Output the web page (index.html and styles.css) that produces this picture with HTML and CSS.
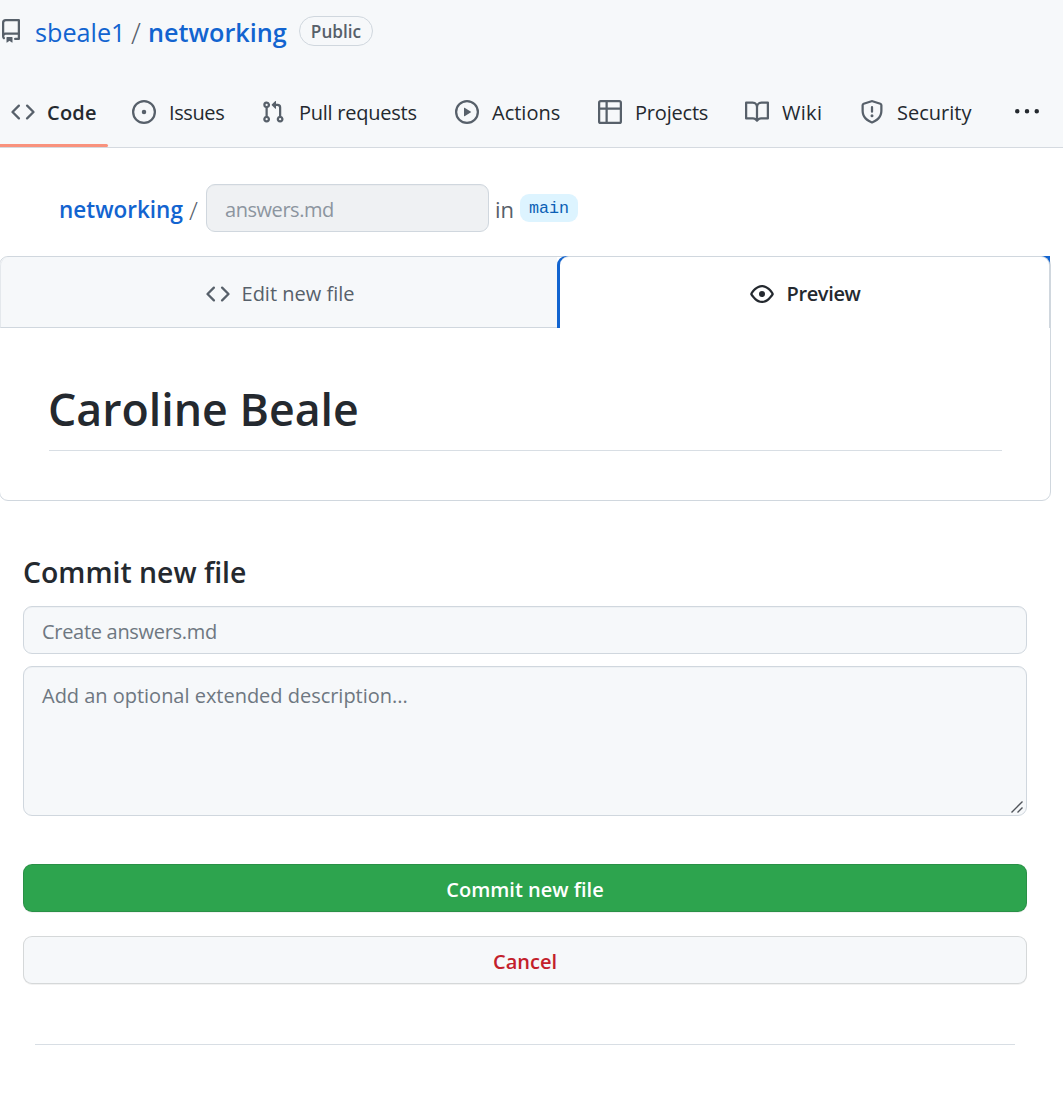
FILE: index.html
```html
<!DOCTYPE html>
<html lang="en">
<head>
<meta charset="utf-8">
<title>New File · sbeale1/networking</title>
<link rel="stylesheet" href="styles.css">
</head>
<body>
<header class="repo-header">
  <div class="repo-title">
    <svg class="icon repo-icon" viewBox="0 0 16 16"><path fill-rule="evenodd" d="M2 2.5A2.5 2.5 0 014.5 0h8.75a.75.75 0 01.75.75v12.5a.75.75 0 01-.75.75h-2.5a.75.75 0 110-1.5h1.75v-2h-8a1 1 0 00-.714 1.7.75.75 0 01-1.072 1.05A2.495 2.495 0 012 11.5v-9zm10.5-1V9h-8c-.356 0-.694.074-1 .208V2.5a1 1 0 011-1h8zM5 12.25v3.25a.25.25 0 00.4.2l1.45-1.087a.25.25 0 01.3 0L8.6 15.7a.25.25 0 00.4-.2v-3.25a.25.25 0 00-.25-.25h-3.5a.25.25 0 00-.25.25z"/></svg>
    <a class="owner">sbeale1</a>
    <span class="slash">/</span>
    <a class="repo-name">networking</a>
    <span class="label">Public</span>
  </div>
  <nav class="tabs">
    <a class="tab tab-selected"><svg class="icon" viewBox="0 0 16 16"><path fill-rule="evenodd" d="M4.72 3.22a.75.75 0 011.06 1.06L2.06 8l3.72 3.72a.75.75 0 11-1.06 1.06L.47 8.53a.75.75 0 010-1.06l4.25-4.25zm6.56 0a.75.75 0 10-1.06 1.06L13.94 8l-3.72 3.72a.75.75 0 101.06 1.06l4.25-4.25a.75.75 0 000-1.06l-4.25-4.25z"/></svg><span>Code</span></a>
    <a class="tab tab-issues"><svg class="icon" viewBox="0 0 16 16"><path d="M8 9.5a1.5 1.5 0 100-3 1.5 1.5 0 000 3z"/><path fill-rule="evenodd" d="M8 0a8 8 0 100 16A8 8 0 008 0zM1.5 8a6.5 6.5 0 1113 0 6.5 6.5 0 01-13 0z"/></svg><span>Issues</span></a>
    <a class="tab tab-pulls"><svg class="icon" viewBox="0 0 16 16"><path fill-rule="evenodd" d="M7.177 3.073L9.573.677A.25.25 0 0110 .854v4.792a.25.25 0 01-.427.177L7.177 3.427a.25.25 0 010-.354zM3.75 2.5a.75.75 0 100 1.5.75.75 0 000-1.5zm-2.25.75a2.25 2.25 0 113 2.122v5.256a2.251 2.251 0 11-1.5 0V5.372A2.25 2.25 0 011.5 3.25zM11 2.5h-1V4h1a1 1 0 011 1v5.628a2.251 2.251 0 101.5 0V5A2.5 2.5 0 0011 2.5zm1 10.25a.75.75 0 111.5 0 .75.75 0 01-1.5 0zM3.75 12a.75.75 0 100 1.5.75.75 0 000-1.5z"/></svg><span>Pull requests</span></a>
    <a class="tab"><svg class="icon" viewBox="0 0 16 16"><path fill-rule="evenodd" d="M1.5 8a6.5 6.5 0 1113 0 6.5 6.5 0 01-13 0zM8 0a8 8 0 100 16A8 8 0 008 0zM6.379 5.227A.25.25 0 006 5.442v5.117a.25.25 0 00.379.214l4.264-2.559a.25.25 0 000-.428L6.379 5.227z"/></svg><span>Actions</span></a>
    <a class="tab tab-projects"><svg class="icon" viewBox="0 0 16 16"><path fill-rule="evenodd" d="M0 1.75C0 .784.784 0 1.75 0h12.5C15.216 0 16 .784 16 1.75v12.5A1.75 1.75 0 0114.25 16H1.75A1.75 1.75 0 010 14.25V1.75zM1.5 6.5v7.75c0 .138.112.25.25.25H5v-8H1.5zM5 5H1.5V1.75a.25.25 0 01.25-.25H5V5zm1.5 1.5v8h7.75a.25.25 0 00.25-.25V6.5h-8zm8-1.5h-8V1.5h7.75a.25.25 0 01.25.25V5z"/></svg><span>Projects</span></a>
    <a class="tab tab-wiki"><svg class="icon" viewBox="0 0 16 16"><path fill-rule="evenodd" d="M0 1.75A.75.75 0 01.75 1h4.253c1.227 0 2.317.59 3 1.501A3.744 3.744 0 0111.006 1h4.245a.75.75 0 01.75.75v10.5a.75.75 0 01-.75.75h-4.507a2.25 2.25 0 00-1.591.659l-.622.621a.75.75 0 01-1.06 0l-.622-.621A2.25 2.25 0 005.258 13H.75a.75.75 0 01-.75-.75V1.75zm8.755 3a2.25 2.25 0 012.25-2.25H14.5v9h-3.757c-.71 0-1.4.201-1.992.572l.004-7.322zm-1.504 7.324l.004-5.073-.002-2.253A2.25 2.25 0 005.003 2.5H1.5v9h3.757a3.75 3.75 0 011.994.574z"/></svg><span>Wiki</span></a>
    <a class="tab"><svg class="icon" viewBox="0 0 16 16"><path fill-rule="evenodd" d="M7.467.133a1.75 1.75 0 011.066 0l5.25 1.68A1.75 1.75 0 0115 3.48V7c0 1.566-.32 3.182-1.303 4.682-.983 1.498-2.585 2.813-5.032 3.855a1.7 1.7 0 01-1.33 0c-2.447-1.042-4.049-2.357-5.032-3.855C1.32 10.182 1 8.566 1 7V3.48a1.75 1.75 0 011.217-1.667l5.25-1.68zm.61 1.429a.25.25 0 00-.153 0l-5.25 1.68a.25.25 0 00-.174.238V7c0 1.358.275 2.666 1.057 3.86.784 1.194 2.121 2.34 4.366 3.297a.2.2 0 00.154 0c2.245-.956 3.582-2.104 4.366-3.298C13.225 9.666 13.5 8.36 13.5 7V3.48a.25.25 0 00-.174-.237l-5.25-1.68zM9 10.5a1 1 0 11-2 0 1 1 0 012 0zm-.25-5.75a.75.75 0 10-1.5 0v3a.75.75 0 001.5 0v-3z"/></svg><span>Security</span></a>
    <a class="tab tab-more"><svg class="icon" viewBox="0 0 16 16"><path d="M8 9a1.5 1.5 0 100-3 1.5 1.5 0 000 3zM1.5 9a1.5 1.5 0 100-3 1.5 1.5 0 000 3zm13 0a1.5 1.5 0 100-3 1.5 1.5 0 000 3z"/></svg></a>
  </nav>
</header>
<main>
  <div class="file-path">
    <a class="path-repo">networking</a>
    <span class="path-slash">/</span>
    <div class="field filename">answers.md</div>
    <span class="path-in">in</span>
    <span class="branch">main</span>
  </div>
  <section class="editor">
    <div class="editor-tabs">
      <button class="editor-tab"><svg class="icon" viewBox="0 0 16 16"><path fill-rule="evenodd" d="M4.72 3.22a.75.75 0 011.06 1.06L2.06 8l3.72 3.72a.75.75 0 11-1.06 1.06L.47 8.53a.75.75 0 010-1.06l4.25-4.25zm6.56 0a.75.75 0 10-1.06 1.06L13.94 8l-3.72 3.72a.75.75 0 101.06 1.06l4.25-4.25a.75.75 0 000-1.06l-4.25-4.25z"/></svg><span>Edit new file</span></button>
      <div class="active-wrap">
        <button class="editor-tab editor-tab-active"><svg class="icon" viewBox="0 0 16 16"><path fill-rule="evenodd" d="M1.679 7.932c.412-.621 1.242-1.75 2.366-2.717C5.175 4.242 6.527 3.5 8 3.5c1.473 0 2.824.742 3.955 1.715 1.124.967 1.954 2.096 2.366 2.717a.119.119 0 010 .136c-.412.621-1.242 1.75-2.366 2.717C10.825 11.758 9.473 12.5 8 12.5c-1.473 0-2.824-.742-3.955-1.715C2.92 9.818 2.09 8.69 1.679 8.068a.119.119 0 010-.136zM8 2c-1.981 0-3.67.992-4.933 2.078C1.797 5.169.88 6.423.43 7.1a1.619 1.619 0 000 1.798c.45.678 1.367 1.932 2.637 3.024C4.329 13.008 6.019 14 8 14c1.981 0 3.67-.992 4.933-2.078 1.27-1.091 2.187-2.345 2.637-3.023a1.619 1.619 0 000-1.798c-.45-.678-1.367-1.932-2.637-3.023C11.671 2.992 9.981 2 8 2zm0 8a2 2 0 100-4 2 2 0 000 4z"/></svg><span>Preview</span></button>
      </div>
    </div>
    <article class="preview">
      <h1>Caroline Beale</h1>
    </article>
  </section>
  <form class="commit">
    <h2>Commit new file</h2>
    <input class="field summary" type="text" placeholder="Create answers.md">
    <div class="description-wrap">
      <textarea class="field description" placeholder="Add an optional extended description..."></textarea>
      <svg class="grip" viewBox="0 0 14 14"><path d="M1.5 12.5l11-11M7.5 12.5l5-5"/></svg>
    </div>
    <button type="button" class="btn btn-primary">Commit new file</button>
    <button type="button" class="btn btn-danger">Cancel</button>
  </form>
  <hr class="footer-rule">
</main>
</body>
</html>
```

FILE: styles.css
```css
* {
  box-sizing: border-box;
}

body {
  margin: 0;
  background: #fff;
  color: #24292f;
  font: 20px/30px "Open Sans", "Noto Sans", sans-serif;
  overflow: hidden;
}

button,
input,
textarea {
  font: inherit;
}

.icon {
  width: 24px;
  height: 24px;
  flex: none;
  fill: #57606a;
}

.repo-header {
  background: #f6f8fa;
  border-bottom: 1px solid #d5dae0;
}

.repo-title {
  display: flex;
  align-items: center;
  height: 64px;
  font-size: 25.2px;
  white-space: nowrap;
}

.repo-icon {
  margin: 0 12px 2px -1px;
}

.owner,
.repo-name,
.path-repo {
  color: #1264d0;
}

.owner {
  width: 96px;
}

.slash {
  width: 17px;
  padding-top: 1px;
  color: #57606a;
  font-size: 29px;
  font-weight: 300;
}

.repo-name {
  width: 151px;
  font-weight: 600;
}

.label {
  display: flex;
  align-items: center;
  justify-content: center;
  width: 74px;
  height: 30px;
  margin-bottom: 2px;
  padding-top: 1px;
  border: 1px solid #d0d7de;
  border-radius: 15px;
  color: #57606a;
  font-size: 17.2px;
  font-weight: 560;
}

.tabs {
  display: grid;
  grid-template-columns: 121px 129px 194px 143px 147px 115px 155px 24px;
  height: 67px;
  margin-top: 16px;
  padding-left: 11px;
}

.tab {
  display: flex;
  align-items: center;
  gap: 13px;
  padding-bottom: 3px;
  white-space: nowrap;
}

.tab span {
  padding-top: 2px;
}

.tab-selected {
  position: relative;
  gap: 12px;
  font-weight: 570;
  letter-spacing: 0.2px;
}

.tab-selected::after {
  content: "";
  position: absolute;
  left: -11px;
  bottom: 0;
  width: 108px;
  height: 3px;
  background: #f9927d;
  border-radius: 0 2px 2px 0;
}

.tab-issues {
  letter-spacing: -0.4px;
}

.tab-pulls {
  gap: 14px;
  letter-spacing: -0.25px;
}

.tab-projects {
  letter-spacing: -0.2px;
}

.tab-wiki {
  letter-spacing: 0.3px;
}

.tab-more .icon {
  fill: #24292f;
}

.file-path {
  display: flex;
  align-items: center;
  height: 108px;
  padding: 12px 0 0 59px;
  font-size: 22.5px;
  color: #57606a;
}

.path-repo {
  width: 130px;
  padding-top: 4px;
  font-weight: 580;
}

.path-slash {
  width: 17px;
  padding-top: 3px;
  font-size: 26px;
  font-weight: 300;
}

.field {
  border: 1px solid #d0d7de;
  border-radius: 9px;
  background: #f6f8fa;
  box-shadow: inset 0 1px 0 rgba(208, 215, 222, 0.2);
  font-size: 20px;
}

.filename {
  display: flex;
  align-items: center;
  width: 283px;
  height: 48px;
  padding: 4px 18px 0;
  background: #eff1f3;
  color: #8c959f;
  letter-spacing: -0.45px;
}

.path-in {
  width: 31px;
  padding: 2px 0 0 6px;
  font-size: 22px;
}

.branch {
  width: 58px;
  height: 28px;
  border-radius: 9px;
  background: #ddf4ff;
  color: #0b60b5;
  font: 16.7px/30px "Liberation Mono", monospace;
  text-align: center;
}

.editor {
  width: 1052px;
  height: 245px;
  margin-left: -1px;
  border: 1px solid #d0d7de;
  border-radius: 9px;
}

.editor-tabs {
  display: flex;
  height: 71px;
}

.editor-tab {
  display: flex;
  align-items: center;
  justify-content: center;
  gap: 12px;
  width: 557px;
  padding: 4px 0 0 2px;
  border: 0;
  border-bottom: 1px solid #d0d7de;
  border-left: 1px solid #e4e8ec;
  border-top-left-radius: 9px;
  background: #f6f8fa;
  color: #57606a;
}

.active-wrap {
  display: flex;
  width: 493px;
  margin-top: -1px;
  padding-left: 3px;
  border-top-left-radius: 9px;
  background: #1264d0;
}

.editor-tab-active {
  width: 490px;
  padding-top: 3px;
  border: 0;
  border-top: 1px solid #d0d7de;
  border-right: 1px solid #d0d7de;
  border-radius: 9px 9px 0 0;
  background: #fff;
  color: #24292f;
  font-weight: 550;
  letter-spacing: -0.35px;
}

.editor-tab-active .icon {
  fill: #24292f;
}

.preview {
  padding: 48px;
}

h1 {
  height: 75px;
  margin: 0 0 0 1px;
  border-bottom: 1px solid #d8dee4;
  font-size: 44.7px;
  font-weight: 570;
  line-height: 66px;
  text-indent: -1px;
}

.commit {
  display: flex;
  flex-direction: column;
  width: 1004px;
  margin: 53px 0 0 23px;
}

h2 {
  height: 52px;
  margin: 0;
  font-size: 28.4px;
  font-weight: 560;
  line-height: 36px;
}

.summary,
.description {
  display: block;
  width: 100%;
  color: #24292f;
}

.summary {
  height: 48px;
  padding: 3px 18px 0;
  letter-spacing: -0.3px;
}

.description-wrap {
  position: relative;
  margin-top: 12px;
}

.description {
  height: 150px;
  padding: 14px 18px;
  letter-spacing: -0.02px;
  resize: none;
}

.grip {
  position: absolute;
  right: 3px;
  bottom: 2px;
  width: 14px;
  height: 14px;
  fill: none;
  stroke: #50545a;
  stroke-width: 1.4;
}

.field::placeholder {
  color: #6e7781;
}

.btn {
  height: 48px;
  padding: 3px 0 0;
  border: 1px solid rgba(27, 31, 36, 0.15);
  border-radius: 9px;
  font-weight: 570;
  box-shadow: 0 1px 0 rgba(27, 31, 36, 0.06);
}

.btn-primary {
  margin-top: 48px;
  background: #2da44e;
  color: #fff;
}

.btn-danger {
  margin-top: 24px;
  background: #f6f8fa;
  color: #c3202b;
}

.footer-rule {
  width: 980px;
  height: 1px;
  margin: 60px 0 0 35px;
  border: 0;
  background: #d8dee4;
}
```
